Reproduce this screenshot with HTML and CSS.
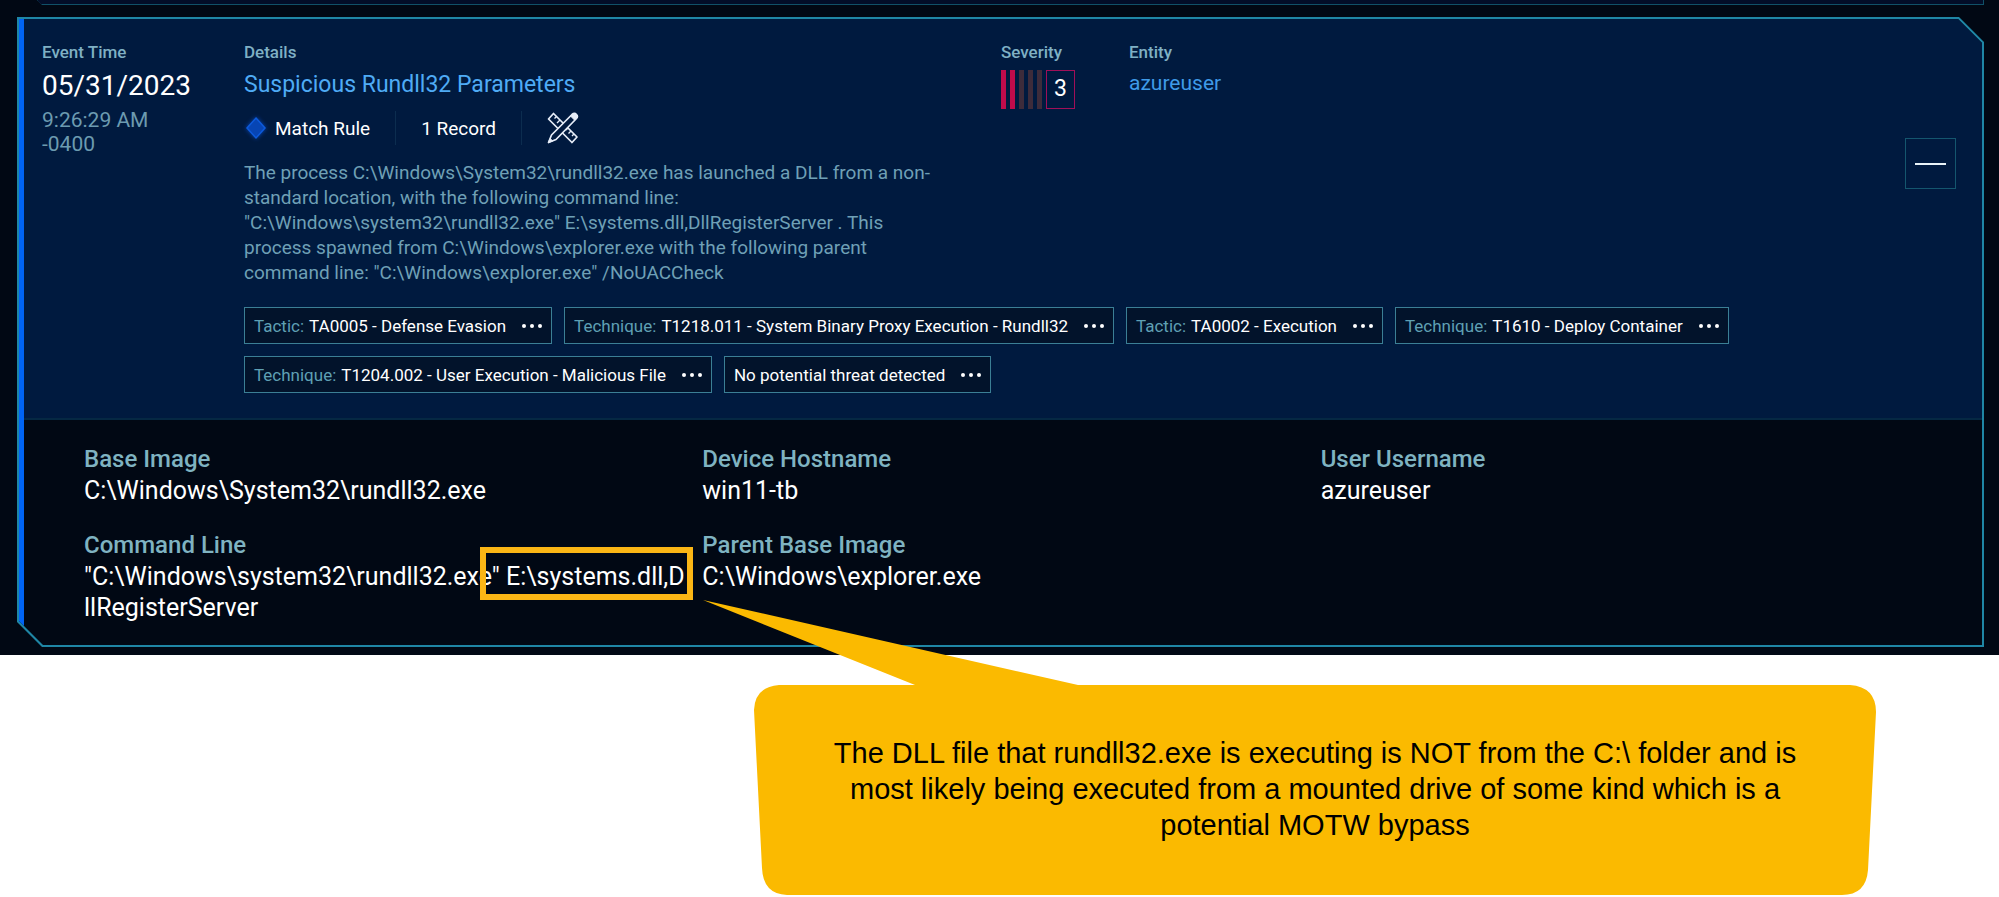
FILE: index.html
```
<!DOCTYPE html>
<html lang="en">
<head>
    <meta charset="UTF-8">
    <meta name="viewport" content="width=device-width, initial-scale=1.0">
    <title>Event Details</title>
    <link rel="stylesheet" href="styles.css">
</head>
<body>
    <main class="timeline">
        <div class="card card-previous"><div class="card-inner"></div></div>

        <article class="card card-event">
            <div class="card-inner">
                <section class="summary">
                    <div class="summary-row">
                        <div class="col-time">
                            <h2 class="label">Event Time</h2>
                            <p class="date">05/31/2023</p>
                            <p class="time">9:26:29 AM<br>-0400</p>
                        </div>

                        <div class="col-details">
                            <h2 class="label">Details</h2>
                            <a class="title" href="#">Suspicious Rundll32 Parameters</a>
                            <ul class="meta">
                                <li>
                                    <svg class="diamond" width="24" height="28" viewBox="0 0 24 28">
                                        <path d="M12 4 L21 14 L12 24 L3 14 Z" fill="#0745b4" stroke="#0d5bdc" stroke-width="1.5"/>
                                    </svg>
                                    Match Rule
                                </li>
                                <li>1 Record</li>
                                <li>
                                    <svg class="tools" width="32" height="32" viewBox="0 0 32 32" fill="none" stroke="#e6edf8" stroke-width="1.7" stroke-linejoin="round">
                                        <path d="M6.5 1.5 L30 25 L25 30.5 L1.5 7 Z"/>
                                        <path d="M9.5 4.5 L7.5 6.5 M13 8 L10 11 M16.5 11.5 L14.5 13.5 M21 16 L19 18 M24 19 L21.5 21.5 M27 22 L25 24" stroke-width="1.4"/>
                                        <path class="pencil" d="M25 2.5 Q27.5 0.5 29.5 2.5 Q31.5 4.5 29 7 L9 27.5 L1.5 30.5 L4.5 23 Z"/>
                                        <path d="M1.5 30.5 L3 26.5 L5.8 29 Z M25 2.5 Q27.5 0.5 29.5 2.5 Q31.5 4.5 29 7 L27.5 8 L23.5 4 Z" fill="#e6edf8" stroke-width="1"/>
                                    </svg>
                                </li>
                            </ul>
                            <p class="description">
                                The process C:\Windows\System32\rundll32.exe has launched a DLL from a non-<br>
                                standard location, with the following command line:<br>
                                "C:\Windows\system32\rundll32.exe" E:\systems.dll,DllRegisterServer . This<br>
                                process spawned from C:\Windows\explorer.exe with the following parent<br>
                                command line: "C:\Windows\explorer.exe" /NoUACCheck
                            </p>
                        </div>

                        <div class="col-severity">
                            <h2 class="label">Severity</h2>
                            <div class="severity">
                                <span class="bar on"></span>
                                <span class="bar on"></span>
                                <span class="bar"></span>
                                <span class="bar"></span>
                                <span class="bar"></span>
                                <span class="score">3</span>
                            </div>
                        </div>

                        <div class="col-entity">
                            <h2 class="label">Entity</h2>
                            <a class="entity" href="#">azureuser</a>
                        </div>

                        <button type="button" class="collapse" aria-label="Collapse"><span></span></button>
                    </div>

                    <ul class="tags">
                        <li><span>Tactic:</span> TA0005 - Defense Evasion <button type="button" class="more" aria-label="More"><i></i><i></i><i></i></button></li>
                        <li><span>Technique:</span> T1218.011 - System Binary Proxy Execution - Rundll32 <button type="button" class="more" aria-label="More"><i></i><i></i><i></i></button></li>
                        <li><span>Tactic:</span> TA0002 - Execution <button type="button" class="more" aria-label="More"><i></i><i></i><i></i></button></li>
                        <li><span>Technique:</span> T1610 - Deploy Container <button type="button" class="more" aria-label="More"><i></i><i></i><i></i></button></li>
                        <li><span>Technique:</span> T1204.002 - User Execution - Malicious File <button type="button" class="more" aria-label="More"><i></i><i></i><i></i></button></li>
                        <li>No potential threat detected <button type="button" class="more" aria-label="More"><i></i><i></i><i></i></button></li>
                    </ul>
                </section>

                <dl class="fields">
                    <div>
                        <dt>Base Image</dt>
                        <dd>C:\Windows\System32\rundll32.exe</dd>
                    </div>
                    <div>
                        <dt>Device Hostname</dt>
                        <dd>win11-tb</dd>
                    </div>
                    <div>
                        <dt>User Username</dt>
                        <dd>azureuser</dd>
                    </div>
                    <div>
                        <dt>Command Line</dt>
                        <dd>"C:\Windows\system32\rundll32.exe<span class="highlight">" E:\systems.dll,D</span><br>llRegisterServer</dd>
                    </div>
                    <div>
                        <dt>Parent Base Image</dt>
                        <dd>C:\Windows\explorer.exe</dd>
                    </div>
                </dl>
            </div>
        </article>
    </main>

    <aside class="callout">
        <svg class="callout-shape" width="1174" height="296" viewBox="0 0 1174 296">
            <path d="M0 0 L375 85 L1147 85 Q1173 87 1173 112 L1165 270 Q1163 295 1139 295 L84 295 Q60 294 59 268 L51 110 Q52 87 76 85 L212 85 Z" fill="#fbba00"/>
        </svg>
        <p>The DLL file that rundll32.exe is executing is NOT from the C:\ folder and is<br>
        most likely being executed from a mounted drive of some kind which is a<br>
        potential MOTW bypass</p>
    </aside>
</body>
</html>
```

FILE: styles.css
```
* {
    box-sizing: border-box;
}

body {
    margin: 0;
    background-color: #fff;
    font-family: Roboto, Arial, sans-serif;
}

h2, p, ul, dl, dd {
    margin: 0;
    padding: 0;
}

ul {
    list-style: none;
}

a {
    text-decoration: none;
}

.timeline {
    padding: 0 15px 8px 17px;
    background-color: #010814;
}

/* cut-corner cards: the outer box is the border, the inner one the fill */
.card {
    --cut: 25px;
    padding: 2px;
    background-color: #1f86a5;
}

.card-previous {
    height: 5px;
    margin-left: 20px;
    padding: 0 1px 1px;
    background-color: #105068;
    clip-path: polygon(0 0, 100% 0, 100% 100%, 5px 100%);
}

.card-previous .card-inner {
    height: 4px;
    background-color: #020d28;
}

.card-event {
    margin-top: 12px;
    clip-path: polygon(0 0, calc(100% - var(--cut)) 0, 100% var(--cut), 100% 100%, var(--cut) 100%, 0 calc(100% - var(--cut)));
}

.card-event .card-inner {
    --cut: 24px;
    border-left: 5px solid #0064f5;
    background-color: #010814;
    clip-path: polygon(0 0, calc(100% - var(--cut)) 0, 100% var(--cut), 100% 100%, var(--cut) 100%, 0 calc(100% - var(--cut)));
}

.summary {
    padding: 23px 26px 25px 18px;
    background-color: #001a3f;
    border-bottom: 2px solid #052843;
}

.summary-row {
    display: flex;
}

.col-time {
    width: 202px;
}

.col-details {
    width: 757px;
}

.col-severity {
    width: 128px;
}

.label {
    margin-bottom: 7px;
    color: #7fb0c4;
    font-size: 17px;
    font-weight: 500;
    line-height: 20px;
}

.date {
    color: #fff;
    font-size: 28px;
    line-height: 34px;
}

.time {
    margin-top: 5px;
    color: #6c9bb0;
    font-size: 21px;
    line-height: 24px;
}

.title {
    display: block;
    color: #4fabf5;
    font-size: 23px;
    line-height: 32px;
}

.meta {
    display: flex;
    align-items: center;
    height: 34px;
    margin-top: 10px;
    color: #fff;
    font-size: 19px;
}

.meta li {
    display: flex;
    align-items: center;
    height: 34px;
    padding: 0 25px;
}

.meta li:first-child {
    padding-left: 0;
}

.meta li + li {
    border-left: 1px solid #0c2d4f;
}

.diamond {
    margin-right: 7px;
    filter: drop-shadow(0 0 2px #0745b4);
}

.pencil {
    fill: #001a3f;
}

.description {
    margin-top: 15px;
    color: #6fa0b6;
    font-size: 19px;
    line-height: 25px;
    white-space: nowrap;
}

.severity {
    display: flex;
    gap: 4px;
    height: 39px;
    margin-top: 8px;
}

.bar {
    width: 5px;
    background-color: #3d2c3b;
}

.bar.on {
    background-color: #c00c4b;
}

.score {
    width: 29px;
    border: 1px solid #a00f58;
    color: #fff;
    font-size: 23px;
    line-height: 36px;
    text-align: center;
}

.entity {
    display: block;
    color: #3f9be8;
    font-size: 21px;
    line-height: 28px;
}

.collapse {
    display: flex;
    align-items: center;
    justify-content: center;
    align-self: center;
    width: 51px;
    height: 51px;
    margin-left: auto;
    padding: 0;
    border: 1px solid #14566e;
    background-color: transparent;
    cursor: pointer;
}

.collapse span {
    width: 31px;
    height: 2px;
    background-color: #e8f3f8;
}

.tags {
    display: flex;
    flex-wrap: wrap;
    gap: 12px;
    margin: 22px 80px 0 202px;
}

.tags li {
    display: flex;
    align-items: center;
    gap: 5px;
    height: 37px;
    padding: 0 9px;
    border: 1px solid #3b7f95;
    background-color: #02132b;
    color: #fff;
    font-size: 17px;
}

.tags span {
    color: #5fa0b4;
}

.more {
    display: flex;
    gap: 4px;
    margin-left: 11px;
    padding: 0;
    border: none;
    background-color: transparent;
    cursor: pointer;
}

.more i {
    width: 4px;
    height: 4px;
    border-radius: 50%;
    background-color: #fff;
}

.fields {
    display: grid;
    grid-template-columns: repeat(3, 1fr);
    row-gap: 24px;
    padding: 24px 43px 22px 60px;
    font-size: 24px;
    line-height: 31px;
}

.fields dt {
    color: #7fb3c1;
    font-weight: 500;
}

.fields dd {
    color: #fff;
    font-size: 25px;
    white-space: nowrap;
}

.highlight {
    position: relative;
}

.highlight::after {
    content: "";
    position: absolute;
    inset: -15px -8px -9px -12px;
    border: 6px solid #fbb615;
}

.callout {
    position: relative;
    width: 1122px;
    margin: 30px 0 0 754px;
    padding: 50px 40px 52px;
    color: #000;
    font-family: "Liberation Sans", Arial, sans-serif;
    font-size: 29px;
    line-height: 36px;
    text-align: center;
    white-space: nowrap;
}

/* bubble with its pointer reaching up over the card */
.callout-shape {
    position: absolute;
    top: -85px;
    left: -51px;
}

.callout p {
    position: relative;
}
```
